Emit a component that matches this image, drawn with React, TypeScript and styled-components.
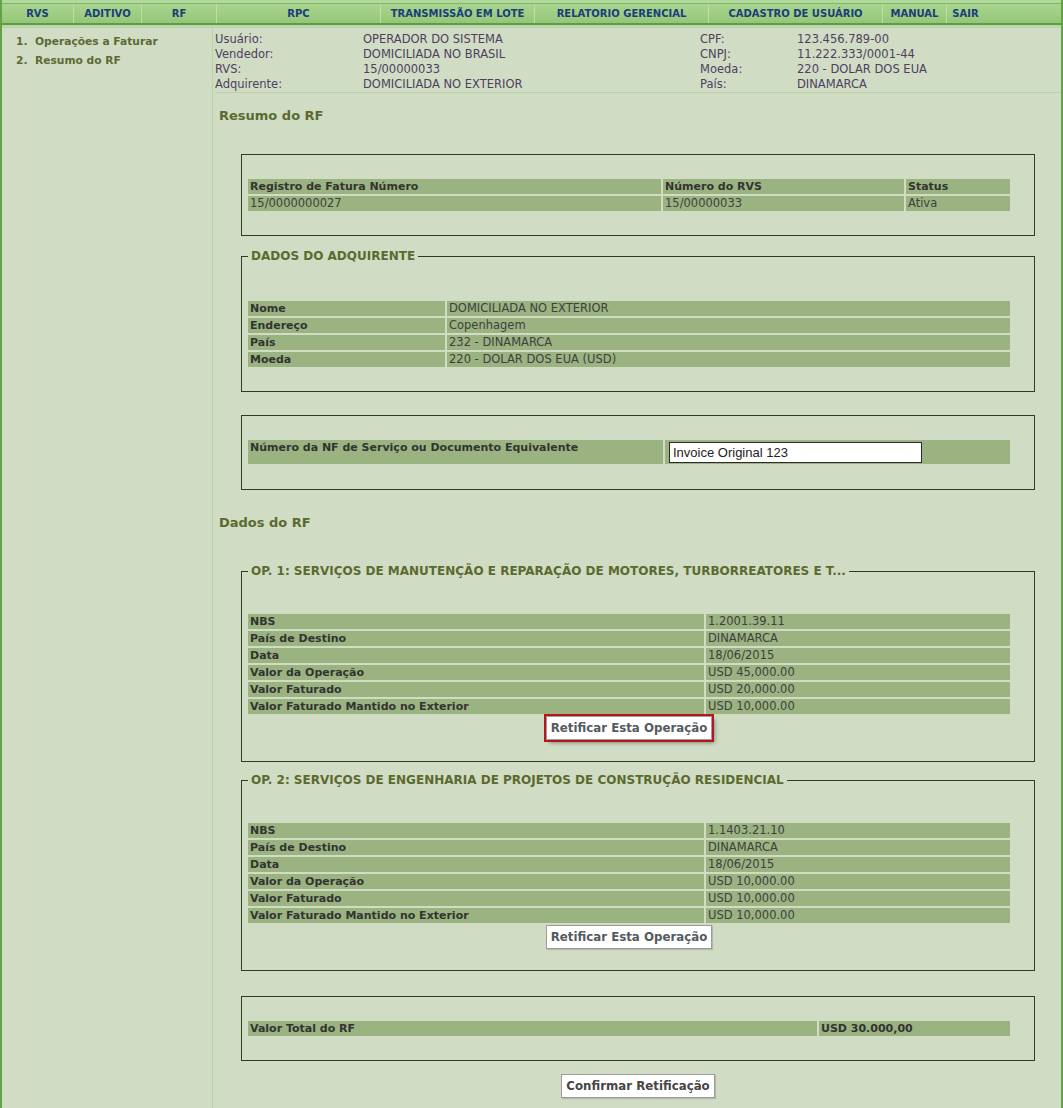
import React from 'react';
import styled, { createGlobalStyle } from 'styled-components';

const GlobalStyle = createGlobalStyle`
  html, body { margin: 0; padding: 0; background: #d1dcc5; }
  body {
    font-family: "DejaVu Sans", Verdana, sans-serif;
    font-size: 11.5px;
    color: #3a3a3a;
  }
  * { box-sizing: border-box; }
`;

const Page = styled.div`
  min-height: 100vh;
  width: 1063px;
  border-left: 2px solid #62a346;
  border-right: 2px solid #62a346;
  display: flex;
  flex-direction: column;
`;

const NavWrap = styled.div`
  padding-top: 3px;
  background: #b3d89d;
  border-bottom: 3px solid #bdd6ad;
`;

const NavBar = styled.nav`
  display: grid;
  grid-template-columns: 71px 68px 75px 164px 154px 174px 174px 64px 38px 1fr;
  height: 22px;
  border-top: 1px solid #7fb966;
  border-bottom: 2px solid #5f9c46;
  background: linear-gradient(#a9d58e, #93c778);
`;

const NavItem = styled.a`
  display: block;
  text-align: center;
  font-family: "DejaVu Sans", Verdana, sans-serif;
  font-weight: bold;
  font-size: 10px;
  line-height: 19px;
  color: #1a3d7c;
  text-decoration: none;
  white-space: nowrap;
  border-left: 1px solid #bcdfa6;
  &:first-child { border-left: none; }
`;

const Body = styled.div`
  display: flex;
  flex: 1;
`;

const Sidebar = styled.aside`
  width: 211px;
  flex: none;
  border-right: 1px solid #b5d6a0;
  padding: 4px 0 0 14px;
`;

const SideItem = styled.div`
  font-weight: bold;
  font-size: 10.7px;
  line-height: 19px;
  color: #5d6a33;
`;

const Main = styled.main`
  flex: 1;
  padding-bottom: 11px;
`;

const InfoGrid = styled.div`
  display: grid;
  grid-template-columns: 148px 337px 97px 1fr;
  margin-left: 2px;
  padding: 4px 0 0;
  border-bottom: 1px solid #b8d3a5;
  line-height: 15px;
  font-size: 11.5px;
  color: #4d3f5e;
`;

const SectionTitle = styled.h2<{ $mt: number }>`
  margin: ${p => p.$mt}px 0 0 6px;
  font-size: 13px;
  line-height: 18px;
  font-weight: bold;
  color: #5b6a2e;
`;

const Box = styled.fieldset<{ $mt: number; $pt: number; $pb: number }>`
  width: 794px;
  margin: ${p => p.$mt}px 0 0 28px;
  border: 1px solid #2d3f1c;
  padding: ${p => p.$pt}px 0 ${p => p.$pb}px 4px;
  min-width: 0;
`;

const Legend = styled.legend`
  margin-left: 2px;
  padding: 0 3px;
  font-size: 12px;
  line-height: 14px;
  font-weight: bold;
  color: #5b6a2e;
  white-space: nowrap;
`;

const DataGrid = styled.div<{ $cols: string; $rowH?: number }>`
  display: grid;
  grid-template-columns: ${p => p.$cols};
  grid-auto-rows: ${p => p.$rowH ?? 15}px;
  gap: 2px;
  padding: 2px;
  width: 766px;
`;

const Cell = styled.div<{ $bold?: boolean }>`
  background: #9ab380;
  padding: 0 2px;
  line-height: 15px;
  white-space: nowrap;
  overflow: hidden;
  font-size: ${p => (p.$bold ? 11 : 11.5)}px;
  font-weight: ${p => (p.$bold ? 'bold' : 'normal')};
  color: ${p => (p.$bold ? '#333333' : '#404040')};
`;

const TextInput = styled.input`
  display: block;
  width: 253px;
  height: 21px;
  margin: 2px 0 0 2px;
  padding: 0 3px;
  border: 1px solid #2b2b2b;
  background: #ffffff;
  font-family: "Liberation Sans", Arial, sans-serif;
  font-size: 13px;
  color: #222;
`;

const ButtonRow = styled.div<{ $wide?: boolean }>`
  display: flex;
  justify-content: center;
  width: ${p => (p.$wide ? 794 : 766)}px;
`;

const ConfirmRow = styled(ButtonRow)`
  margin: 13px 0 0 28px;
`;

const ActionButton = styled.button<{ $focused?: boolean }>`
  height: 24px;
  padding: 0 4px;
  font-family: "DejaVu Sans", Verdana, sans-serif;
  font-weight: bold;
  font-size: 11.8px;
  color: #555a5e;
  background: #ffffff;
  border: 1px solid #9c9c9c;
  outline: ${p => (p.$focused ? '2px solid #b8141c' : 'none')};
  box-shadow: ${p => (p.$focused ? '3px 3px 4px rgba(0,0,0,0.35)' : '1px 1px 1px rgba(0,0,0,0.15)')};
  cursor: pointer;
`;

const ConfirmButton = styled(ActionButton)`
  color: #464646;
`;

type Row = [string, string];

const info: [string, string, string, string][] = [
  ['Usuário:', 'OPERADOR DO SISTEMA', 'CPF:', '123.456.789-00'],
  ['Vendedor:', 'DOMICILIADA NO BRASIL', 'CNPJ:', '11.222.333/0001-44'],
  ['RVS:', '15/00000033', 'Moeda:', '220 - DOLAR DOS EUA'],
  ['Adquirente:', 'DOMICILIADA NO EXTERIOR', 'País:', 'DINAMARCA'],
];

const adquirente: Row[] = [
  ['Nome', 'DOMICILIADA NO EXTERIOR'],
  ['Endereço', 'Copenhagem'],
  ['País', '232 - DINAMARCA'],
  ['Moeda', '220 - DOLAR DOS EUA (USD)'],
];

const ops: { title: string; rows: Row[]; focused?: boolean }[] = [
  {
    title: 'OP. 1: SERVIÇOS DE MANUTENÇÃO E REPARAÇÃO DE MOTORES, TURBORREATORES E T...',
    focused: true,
    rows: [
      ['NBS', '1.2001.39.11'],
      ['País de Destino', 'DINAMARCA'],
      ['Data', '18/06/2015'],
      ['Valor da Operação', 'USD 45,000.00'],
      ['Valor Faturado', 'USD 20,000.00'],
      ['Valor Faturado Mantido no Exterior', 'USD 10,000.00'],
    ],
  },
  {
    title: 'OP. 2: SERVIÇOS DE ENGENHARIA DE PROJETOS DE CONSTRUÇÃO RESIDENCIAL',
    rows: [
      ['NBS', '1.1403.21.10'],
      ['País de Destino', 'DINAMARCA'],
      ['Data', '18/06/2015'],
      ['Valor da Operação', 'USD 10,000.00'],
      ['Valor Faturado', 'USD 10,000.00'],
      ['Valor Faturado Mantido no Exterior', 'USD 10,000.00'],
    ],
  },
];

const navItems = [
  'RVS', 'ADITIVO', 'RF', 'RPC', 'TRANSMISSÃO EM LOTE',
  'RELATORIO GERENCIAL', 'CADASTRO DE USUÁRIO', 'MANUAL', 'SAIR',
];

export default function App() {
  return (
    <>
      <GlobalStyle />
      <Page>
        <NavWrap>
          <NavBar>
            {navItems.map(n => (
              <NavItem key={n} href="#">{n}</NavItem>
            ))}
            <div />
          </NavBar>
        </NavWrap>
        <Body>
          <Sidebar>
            <SideItem>1.&nbsp; Operações a Faturar</SideItem>
            <SideItem>2.&nbsp; Resumo do RF</SideItem>
          </Sidebar>
          <Main>
            <InfoGrid>
              {info.map(r => (
                <React.Fragment key={r[0]}>
                  <span>{r[0]}</span>
                  <span>{r[1]}</span>
                  <span>{r[2]}</span>
                  <span>{r[3]}</span>
                </React.Fragment>
              ))}
            </InfoGrid>

            <SectionTitle $mt={14}>Resumo do RF</SectionTitle>

            <Box $mt={29} $pt={22} $pb={22}>
              <DataGrid $cols="413px 241px 104px">
                <Cell $bold>Registro de Fatura Número</Cell>
                <Cell $bold>Número do RVS</Cell>
                <Cell $bold>Status</Cell>
                <Cell>15/0000000027</Cell>
                <Cell>15/00000033</Cell>
                <Cell>Ativa</Cell>
              </DataGrid>
            </Box>

            <Box $mt={13} $pt={36} $pb={22}>
              <Legend>DADOS DO ADQUIRENTE</Legend>
              <DataGrid $cols="197px 563px">
                {adquirente.map(([k, v]) => (
                  <React.Fragment key={k}>
                    <Cell $bold>{k}</Cell>
                    <Cell>{v}</Cell>
                  </React.Fragment>
                ))}
              </DataGrid>
            </Box>

            <Box $mt={23} $pt={22} $pb={23}>
              <DataGrid $cols="415px 345px" $rowH={24}>
                <Cell $bold>Número da NF de Serviço ou Documento Equivalente</Cell>
                <Cell>
                  <TextInput defaultValue="Invoice Original 123" />
                </Cell>
              </DataGrid>
            </Box>

            <SectionTitle $mt={24}>Dados do RF</SectionTitle>

            {ops.map((op, i) => (
              <Box key={op.title} $mt={i === 0 ? 32 : 11} $pt={34} $pb={21}>
                <Legend>{op.title}</Legend>
                <DataGrid $cols="456px 304px">
                  {op.rows.map(([k, v]) => (
                    <React.Fragment key={k}>
                      <Cell $bold>{k}</Cell>
                      <Cell>{v}</Cell>
                    </React.Fragment>
                  ))}
                </DataGrid>
                <ButtonRow>
                  <ActionButton $focused={op.focused}>Retificar Esta Operação</ActionButton>
                </ButtonRow>
              </Box>
            ))}

            <Box $mt={25} $pt={22} $pb={22}>
              <DataGrid $cols="569px 191px">
                <Cell $bold>Valor Total do RF</Cell>
                <Cell $bold>USD 30.000,00</Cell>
              </DataGrid>
            </Box>

            <ConfirmRow $wide>
              <ConfirmButton>Confirmar Retificação</ConfirmButton>
            </ConfirmRow>
          </Main>
        </Body>
      </Page>
    </>
  );
}
